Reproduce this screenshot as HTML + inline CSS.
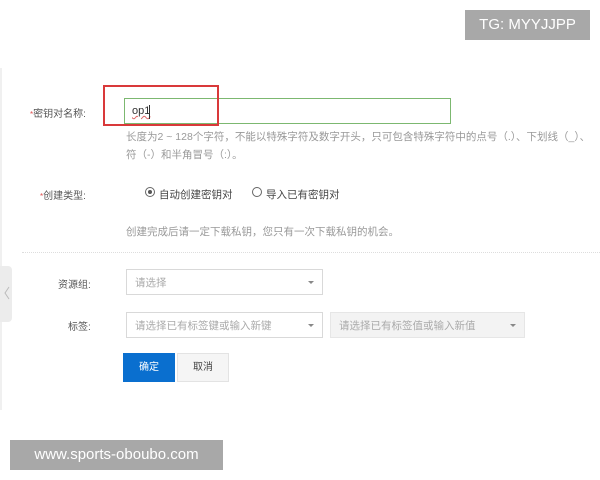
<!DOCTYPE html>
<html><head><meta charset="utf-8"><style>
body{margin:0;width:600px;height:480px;background:#fff;position:relative;overflow:hidden;font-family:"Liberation Sans","Noto Sans CJK SC",sans-serif;}
.a{position:absolute;white-space:nowrap;}
.lbl{font-size:10px;color:#555;}
.req{color:#e05050;font-size:8px;}
.help{font-size:10.5px;color:#999;}
.sel{position:absolute;border:1px solid #d9d9d9;background:#fff;height:26px;box-sizing:border-box;font-size:10.5px;color:#aaa;line-height:26px;padding-left:8px;}
.sel:after{content:"";position:absolute;right:8px;top:11px;border:3px solid transparent;border-top:3px solid #888;}
</style></head><body>
<div class="a" style="left:0;top:68px;width:2px;height:342px;background:#f0f0f0"></div>
<div class="a" style="left:0;top:266px;width:12px;height:56px;background:#ececec;border-radius:0 4px 4px 0"></div>
<svg class="a" style="left:2px;top:285px" width="10" height="16"><path d="M7 2L3 8L7 14" stroke="#bbb" fill="none" stroke-width="1"/></svg>

<div class="a" style="left:465px;top:10px;width:125px;height:30px;background:#a8a8a8;color:#fff;font-size:15px;line-height:30px;text-align:center">TG: MYYJJPP</div>

<div class="a lbl" style="left:30px;top:105px"><span class="req">*</span>密钥对名称:</div>
<div class="a" style="left:124px;top:98px;width:327px;height:26px;border:1px solid #7cb870;box-sizing:border-box"></div>
<div class="a" style="left:132px;top:105px;font-size:11px;color:#333;text-decoration:underline wavy #d66;text-decoration-thickness:1px">op1</div>
<div class="a" style="left:149px;top:105px;width:1px;height:14px;background:#333"></div>
<div class="a" style="left:103px;top:85px;width:116px;height:41px;border:2px solid #d9393a;box-sizing:border-box"></div>
<div class="a help" style="left:126px;top:129px">长度为2 ~ 128个字符，不能以特殊字符及数字开头，只可包含特殊字符中的点号（.）、下划线（_）、</div>
<div class="a help" style="left:126px;top:147px">符（-）和半角冒号（:）。</div>

<div class="a lbl" style="left:40px;top:187px"><span class="req">*</span>创建类型:</div>
<div class="a" style="left:145px;top:187px;width:10px;height:10px;border:1px solid #666;border-radius:50%;box-sizing:border-box"></div>
<div class="a" style="left:148px;top:190px;width:4px;height:4px;background:#555;border-radius:50%"></div>
<div class="a lbl" style="left:159px;top:187px;color:#444;font-size:10.5px">自动创建密钥对</div>
<div class="a" style="left:252px;top:187px;width:10px;height:10px;border:1px solid #666;border-radius:50%;box-sizing:border-box"></div>
<div class="a lbl" style="left:266px;top:187px;color:#444;font-size:10.5px">导入已有密钥对</div>
<div class="a help" style="left:126px;top:224px">创建完成后请一定下载私钥，您只有一次下载私钥的机会。</div>
<div class="a" style="left:22px;top:252px;width:578px;border-top:1px dotted #ddd"></div>

<div class="a lbl" style="left:58px;top:276px">资源组:</div>
<div class="sel" style="left:126px;top:269px;width:197px">请选择</div>
<div class="a lbl" style="left:68px;top:318px">标签:</div>
<div class="sel" style="left:126px;top:312px;width:197px">请选择已有标签键或输入新键</div>
<div class="sel" style="left:330px;top:312px;width:195px;background:#f3f3f3;border-color:#e6e6e6">请选择已有标签值或输入新值</div>

<div class="a" style="left:123px;top:353px;width:52px;height:29px;background:#0a6fcf;color:#fff;font-size:10px;line-height:29px;text-align:center">确定</div>
<div class="a" style="left:177px;top:353px;width:52px;height:29px;background:#f5f5f5;border:1px solid #e3e3e3;box-sizing:border-box;color:#444;font-size:10px;line-height:27px;text-align:center">取消</div>

<div class="a" style="left:10px;top:440px;width:213px;height:30px;background:#a8a8a8;color:#fff;font-size:15px;line-height:30px;text-align:center">www.sports-oboubo.com</div>
</body></html>
